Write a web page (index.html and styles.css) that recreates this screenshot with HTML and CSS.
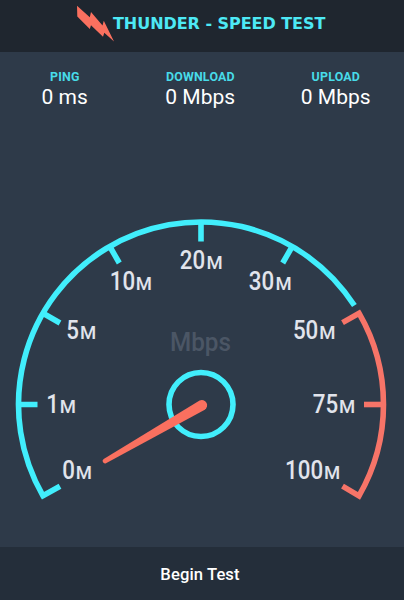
FILE: index.html
```html
<!DOCTYPE html>
<html lang="en">
<head>
<meta charset="utf-8">
<title>Thunder - Speed Test</title>
<link rel="stylesheet" href="styles.css">
</head>
<body>
<div class="app">
  <header class="header">
    <svg class="bolt" width="38" height="38" viewBox="0 0 38 38" aria-hidden="true"><path d="M1 .8 13.8 12.2 15 7 26.5 20.5 27.8 15.7 38 36.5 28.3 27.7 27 31.8 15 20.3 13.8 24 1.3 11.5Z"/></svg>
    <h1 class="title">THUNDER - SPEED TEST</h1>
  </header>
  <main class="main">
    <section class="stats">
      <div class="stat"><span class="label">PING</span><span class="value">0 ms</span></div>
      <div class="stat"><span class="label">DOWNLOAD</span><span class="value">0 Mbps</span></div>
      <div class="stat"><span class="label">UPLOAD</span><span class="value">0 Mbps</span></div>
    </section>
    <svg class="gauge" width="404" height="310" viewBox="0 200 404 310">
      <g class="low">
        <path d="M60 486.2 43 495.8A182.5 182.5 0 0 1 354.4 305.6"/>
        <path d="M18 404.5H37.5M43 313.2 60 323M109.8 246.5 119.3 263M201 222V241.5M292.2 246.5 282.7 263"/>
        <circle cx="201" cy="404.5" r="32"/>
      </g>
      <g class="high">
        <path d="M342.5 322.6 359 313.2A182.5 182.5 0 0 1 359 495.8L342.5 486.2"/>
        <path d="M364 404.5H383"/>
      </g>
      <path class="needle" d="M103.7 458.9 199.6 400.6A5.3 5.3 0 0 1 204.8 409.8L106 463.3A2.5 2.5 0 0 1 103.7 458.9Z"/>
      <g class="num">
        <text transform="translate(62.2 478.5) scale(.86 1)">0</text>
        <text transform="translate(46.2 413) scale(.86 1)">1</text>
        <text transform="translate(66.2 339) scale(.86 1)">5</text>
        <text transform="translate(109.7 290) scale(.86 1)">10</text>
        <text transform="translate(179.7 269) scale(.86 1)">20</text>
        <text transform="translate(248.7 290) scale(.86 1)">30</text>
        <text transform="translate(292.9 338.5) scale(.86 1)">50</text>
        <text transform="translate(312.7 413) scale(.86 1)">75</text>
        <text transform="translate(285 478.5) scale(.86 1)">100</text>
      </g>
      <g class="unit">
        <text x="75.7" y="478.5">M</text>
        <text x="59.8" y="413">M</text>
        <text x="79.9" y="339">M</text>
        <text x="135.7" y="290">M</text>
        <text x="206.5" y="269">M</text>
        <text x="275.5" y="290">M</text>
        <text x="319.3" y="338.5">M</text>
        <text x="339" y="413">M</text>
        <text x="323.9" y="478.5">M</text>
      </g>
      <text class="speed" x="170" y="350.5" textLength="61" lengthAdjust="spacingAndGlyphs">Mbps</text>
    </svg>
  </main>
  <button class="begin">Begin Test</button>
</div>
</body>
</html>
```
FILE: styles.css
```css
body {
  margin: 0;
  font-family: Roboto, sans-serif;
}
.app {
  width: 404px;
  height: 600px;
  display: flex;
  flex-direction: column;
  overflow: hidden;
  background: #2e3a49;
}
.header {
  box-sizing: border-box;
  height: 52px;
  flex: none;
  display: flex;
  align-items: flex-start;
  padding: 5px 0 0 76px;
  background: #1f262f;
}
.bolt {
  flex: none;
  fill: #fa705f;
}
.title {
  margin: 9px 0 0 -1px;
  font: bold 16px/20px "DejaVu Sans", sans-serif;
  letter-spacing: -0.05px;
  color: #4de9f5;
  white-space: nowrap;
}
.main {
  flex: 1;
  display: flex;
  flex-direction: column;
}
.stats {
  display: grid;
  grid-template-columns: repeat(3, 135.5px);
  height: 148px;
  margin-left: -3px;
}
.stat {
  display: flex;
  flex-direction: column;
  align-items: center;
  padding-top: 17px;
}
.label {
  font-size: 12.4px;
  line-height: 16px;
  letter-spacing: 0.2px;
  margin-right: -0.2px;
  font-weight: 700;
  color: #48dbe8;
}
.value {
  font-size: 21px;
  line-height: 24px;
  color: #fff;
}
.gauge {
  display: block;
}
.low, .high {
  fill: none;
  stroke-width: 5.6;
}
.low {
  stroke: #41eefc;
}
.high {
  stroke: #f77468;
}
.needle {
  fill: #fa705f;
}
.num, .unit {
  fill: #e1e4ec;
  font-weight: 500;
}
.num {
  font-size: 26px;
}
.unit {
  font-size: 18.5px;
}
.speed {
  fill: #4b5665;
  font-size: 26px;
  font-weight: 500;
}
.begin {
  flex: none;
  height: 53px;
  border: 0;
  padding: 1px 4px 0 0;
  background: #242e3a;
  color: #fff;
  font: 500 16.6px Roboto, sans-serif;
  letter-spacing: 0.1px;
}
```
